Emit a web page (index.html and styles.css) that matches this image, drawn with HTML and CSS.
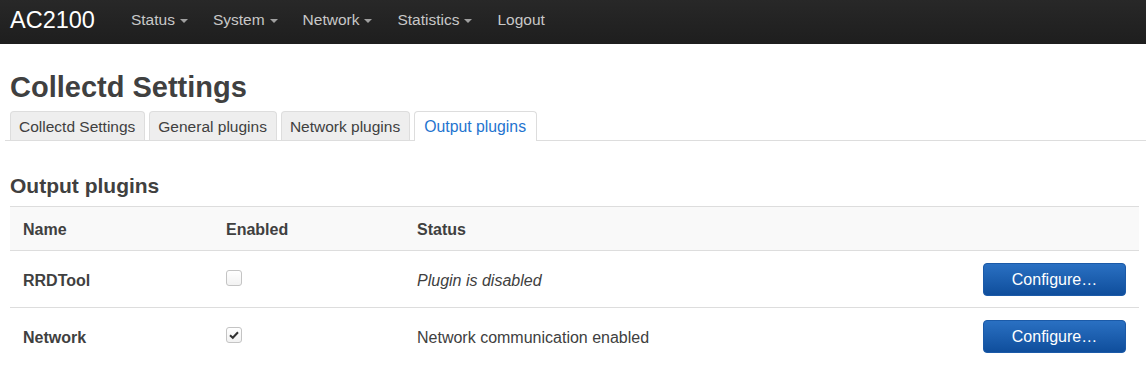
FILE: index.html
```html
<!DOCTYPE html>
<html lang="en">
<head>
    <meta charset="UTF-8">
    <title>Collectd Settings - AC2100</title>
    <link rel="stylesheet" href="styles.css">
</head>
<body>
    <!-- Top bar -->
    <header class="navbar">
        <a class="brand" href="#">AC2100</a>
        <ul class="nav">
            <li><a href="#">Status<span class="caret"></span></a></li>
            <li><a href="#">System<span class="caret"></span></a></li>
            <li><a href="#">Network<span class="caret"></span></a></li>
            <li><a href="#">Statistics<span class="caret"></span></a></li>
            <li><a href="#">Logout</a></li>
        </ul>
    </header>

    <div class="main">
        <h1 class="title">Collectd Settings</h1>

        <!-- Section tabs -->
        <ul class="tabs">
            <li class="tab">Collectd Settings</li>
            <li class="tab">General plugins</li>
            <li class="tab">Network plugins</li>
            <li class="tab active">Output plugins</li>
        </ul>

        <h3 class="section-title">Output plugins</h3>

        <table class="plugins">
            <colgroup>
                <col class="col-name">
                <col class="col-enabled">
                <col>
                <col class="col-action">
            </colgroup>
            <thead>
                <tr>
                    <th>Name</th>
                    <th>Enabled</th>
                    <th>Status</th>
                    <th></th>
                </tr>
            </thead>
            <tbody>
                <tr>
                    <td class="name">RRDTool</td>
                    <td><span class="cbox"></span></td>
                    <td class="muted">Plugin is disabled</td>
                    <td class="action"><button type="button">Configure…</button></td>
                </tr>
                <tr>
                    <td class="name">Network</td>
                    <td>
                        <span class="cbox">
                            <svg viewBox="0 0 14 14" width="14" height="14"><path d="M3 7.2 L5.8 9.8 L11 4.2" fill="none" stroke="#333" stroke-width="2"/></svg>
                        </span>
                    </td>
                    <td>Network communication enabled</td>
                    <td class="action"><button type="button">Configure…</button></td>
                </tr>
            </tbody>
        </table>
    </div>
</body>
</html>
```

FILE: styles.css
```css
body {
    font-family: "Liberation Sans", Arial, sans-serif;
    font-size: 16px;
    color: #404040;
    background-color: #ffffff;
    margin: 0;
    padding: 0;
}

/* Top bar */
.navbar {
    display: flex;
    align-items: center;
    height: 44px;
    padding: 0 0 4px 10px;
    box-sizing: border-box;
    background-image: linear-gradient(#282828, #1e1e1e);
}
.brand {
    color: #ffffff;
    font-size: 23.5px;
    text-decoration: none;
    margin-right: 23.5px;
}
.nav {
    display: flex;
    list-style: none;
    margin: 0;
    padding: 0;
}
.nav a {
    display: block;
    padding: 0 12.5px;
    color: #c8c8c8;
    font-size: 15.5px;
    text-decoration: none;
}
.caret {
    display: inline-block;
    vertical-align: middle;
    margin-left: 5px;
    border-top: 4px solid #a0a0a0;
    border-left: 4px solid transparent;
    border-right: 4px solid transparent;
}

/* Content */
.main {
    padding: 0 7px 0 10px;
}
.title {
    font-size: 29px;
    line-height: 34px;
    font-weight: bold;
    margin: 26px 0 7px 0;
}

/* Tabs */
.tabs {
    display: flex;
    list-style: none;
    margin: 0 -7px 0 -5px;
    padding: 0 0 0 5px;
    border-bottom: 1px solid #dddddd;
}
.tab {
    height: 28px;
    line-height: 29px;
    padding: 0 9px 0 8px;
    margin-right: 4px;
    margin-bottom: -1px;
    font-size: 15.5px;
    background-color: #eeeeee;
    border: 1px solid #dddddd;
    border-bottom: none;
    border-radius: 4px 4px 0 0;
}
.tab.active {
    background-color: #ffffff;
    color: #1f74cf;
    height: 29px;
    padding: 0 10px 0 9px;
    font-size: 15.8px;
}

.section-title {
    font-size: 21px;
    line-height: 24px;
    font-weight: bold;
    margin: 33px 0 8px 0;
}

/* Plugin table */
.plugins {
    width: 100%;
    border-collapse: collapse;
    table-layout: fixed;
}
.col-name {
    width: 203px;
}
.col-enabled {
    width: 191px;
}
.col-action {
    width: 169px;
}
.plugins th {
    text-align: left;
    font-weight: bold;
    font-size: 16px;
    height: 41px;
    padding: 2px 13px 0 13px;
    background-color: #f9f9f9;
    border-top: 1px solid #dddddd;
    border-bottom: 1px solid #dddddd;
}
.plugins td {
    height: 53px;
    padding: 3px 13px 0 13px;
    font-size: 16px;
    vertical-align: middle;
    border-bottom: 1px solid #dddddd;
}
.plugins tr:last-child td {
    border-bottom: none;
}
.plugins td.name {
    font-weight: bold;
}
.plugins td.muted {
    font-style: italic;
}
.plugins td.action {
    text-align: right;
}

/* Checkbox look */
.cbox {
    display: inline-block;
    vertical-align: middle;
    width: 14px;
    height: 14px;
    margin-top: -6px;
    border: 1px solid #c4c4c4;
    border-radius: 3px;
    background-image: linear-gradient(#ffffff, #f2f2f2);
}
.cbox svg {
    display: block;
}

button {
    width: 143px;
    height: 33px;
    margin-top: -2px;
    color: #ffffff;
    font-family: inherit;
    font-size: 16px;
    background-image: linear-gradient(#2a70c2, #0f4e9c);
    border: 1px solid #1b5aa8;
    border-radius: 4px;
    cursor: pointer;
}
```
